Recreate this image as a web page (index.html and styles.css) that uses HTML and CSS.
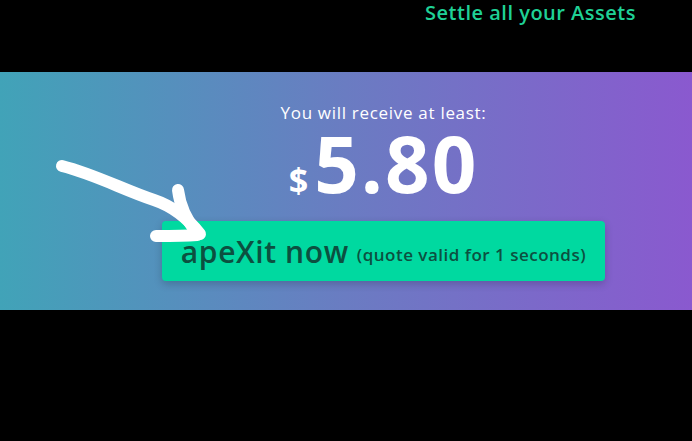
FILE: index.html
```html
<!DOCTYPE html>
<html lang="en">
<head>
  <meta charset="UTF-8" />
  <title>apeXit</title>
  <link rel="stylesheet" href="styles.css">
</head>
<body>
  <header class="top">
    <h2 class="tagline">Settle all your Assets</h2>
  </header>

  <section class="quote-band">
    <svg class="arrow" width="160" height="90" viewBox="0 0 160 90">
      <path d="M8 14 C40 22 70 38 100 48 C118 54 132 64 146 82" />
      <path d="M124 38 C126 54 134 70 143 81" />
      <path d="M102 84 C116 84 130 84 143 83" />
    </svg>
    <div class="quote">
      <p class="quote-label">You will receive at least:</p>
      <div class="amount"><span class="currency">$</span><span class="value">5.80</span></div>
      <button class="exit-button">
        <span class="exit-main">apeXit now</span>
        <span class="exit-note">(quote valid for 1 seconds)</span>
      </button>
    </div>
  </section>
</body>
</html>
```

FILE: styles.css
```css
* {
    margin: 0;
    padding: 0;
    box-sizing: border-box;
}
body {
    font-family: 'Open Sans', sans-serif;
    background-color: #000;
    color: #fff;
}
.top {
    height: 72px;
    display: flex;
    justify-content: flex-end;
    padding-right: 56px;
}
.tagline {
    font-size: 20px;
    font-weight: 600;
    color: #1fd196;
    line-height: 25px;
    letter-spacing: 0.5px;
}
.quote-band {
    position: relative;
    height: 238px;
    background: linear-gradient(90deg, #41a3b8 0%, #6a7cc2 50%, #8a59cf 100%);
    padding-left: 75px;
    padding-top: 29px;
}
.arrow {
    position: absolute;
    left: 54px;
    top: 80px;
    overflow: visible;
}
.arrow path {
    fill: none;
    stroke: #fff;
    stroke-width: 12;
    stroke-linecap: round;
    stroke-linejoin: round;
}
.quote {
    display: flex;
    flex-direction: column;
    align-items: center;
}
.quote-label {
    font-size: 17px;
    line-height: 24px;
    letter-spacing: 0.7px;
}
.amount {
    display: flex;
    align-items: baseline;
    gap: 6px;
    line-height: 76px;
    height: 92px;
}
.currency {
    font-size: 34px;
    font-weight: 700;
}
.value {
    font-size: 78px;
    font-weight: 700;
    letter-spacing: 2px;
}
.exit-button {
    margin-top: 4px;
    width: 443px;
    height: 60px;
    border: none;
    border-radius: 4px;
    background: #00d9a0;
    color: #0c5040;
    font-family: inherit;
    display: flex;
    align-items: center;
    justify-content: center;
    gap: 8px;
    box-shadow: 0 3px 8px rgba(0, 0, 0, 0.2);
    cursor: pointer;
}
.exit-main {
    font-size: 30px;
    font-weight: 600;
    letter-spacing: 0.6px;
}
.exit-note {
    font-size: 17px;
    font-weight: 600;
    letter-spacing: 0.5px;
    padding-top: 6px;
}
```
